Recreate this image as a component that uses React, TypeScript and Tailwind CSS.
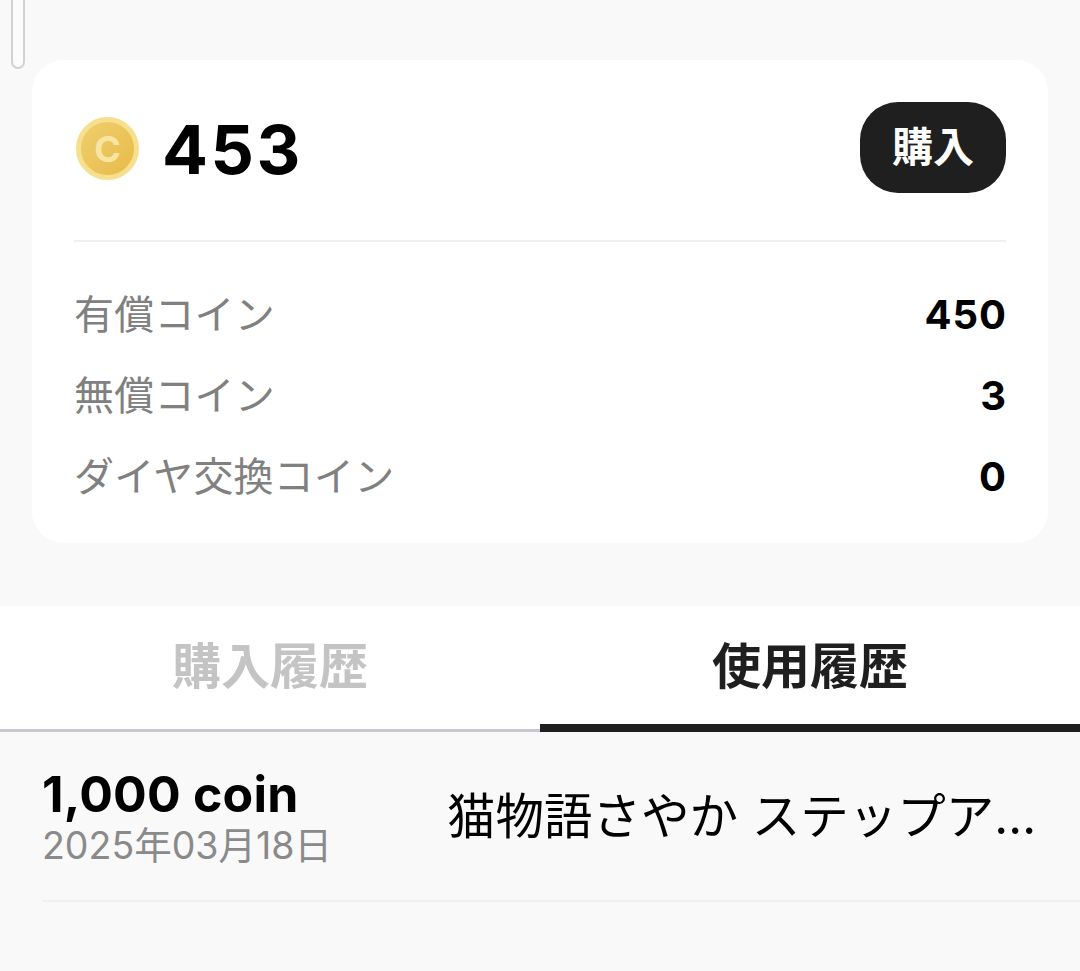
const font = { fontFamily: '"Inter", "Noto Sans CJK JP", sans-serif' }

const balances = [
  { label: '有償コイン', value: '450' },
  { label: '無償コイン', value: '3' },
  { label: 'ダイヤ交換コイン', value: '0' },
]

export default function App() {
  return (
    <div className="relative h-[971px] w-[1080px] overflow-hidden bg-[#f9f9f9]" style={font}>
      {/* scrollbar */}
      <div className="absolute left-[11px] top-[-20px] h-[89px] w-[14px] rounded-b-[7px] border-2 border-[#d2d2d2] bg-[#fbfbfb]" />

      <div className="px-8 pt-[60px]">
        <div className="rounded-[32px] bg-white px-[42px] pb-[26px] pt-[42px]">
          <div className="flex items-center justify-between">
            <div className="flex items-center pt-0.5">
              <div className="ml-0.5 flex h-[63px] w-[63px] items-center justify-center rounded-full border-[5px] border-[#f6e08e] bg-gradient-to-br from-[#efcf6e] to-[#e8ba48]">
                <span className="text-[36px] font-bold leading-none text-[#f8e5a4]">C</span>
              </div>
              <span className="ml-[23px] text-[68px] font-bold leading-none tracking-[2.5px] text-black">453</span>
            </div>
            <button className="flex h-[91px] w-[146px] items-center justify-center rounded-[38px] bg-[#1f1f1f] text-[41px] font-bold text-white">
              購入
            </button>
          </div>

          <div className="mt-[47px] h-0.5 bg-[#f0f0f0]" />

          <div className="mt-[32px] flex flex-col">
            {balances.map(b => (
              <div key={b.label} className="flex h-[81px] items-center justify-between">
                <span className="text-[40px] tracking-[0.2px] leading-none text-[#808080]">{b.label}</span>
                <span className="-mr-px text-[40px] font-bold leading-none tracking-[1px] text-black">{b.value}</span>
              </div>
            ))}
          </div>
        </div>
      </div>

      {/* tabs */}
      <div className="mt-[63px] flex h-[126px] bg-white">
        <div className="flex flex-1 items-center justify-center border-b-[3px] border-[#c8c6d0] pb-0.5 text-[49px] font-bold leading-none text-[#c4c4c4]">
          購入履歴
        </div>
        <div className="flex flex-1 items-center justify-center border-b-[8px] border-[#1f1f1f] pt-[3px] text-[49px] font-bold leading-none text-[#1f1f1f]">
          使用履歴
        </div>
      </div>

      {/* history */}
      <div className="ml-[42px] flex h-[170px] items-center border-b-2 border-[#f0f0f0]">
        <div className="flex w-[405px] shrink-0 flex-col pt-2">
          <span className="text-[50px] font-bold leading-[52px] tracking-[0.2px] text-black">1,000 coin</span>
          <span className="text-[37.5px] leading-[52px] text-[#8a8a8a]">2025年03月18日</span>
        </div>
        <span className="whitespace-nowrap pt-[3px] text-[48.5px] leading-none text-black">猫物語さやか ステップア…</span>
      </div>
    </div>
  )
}
